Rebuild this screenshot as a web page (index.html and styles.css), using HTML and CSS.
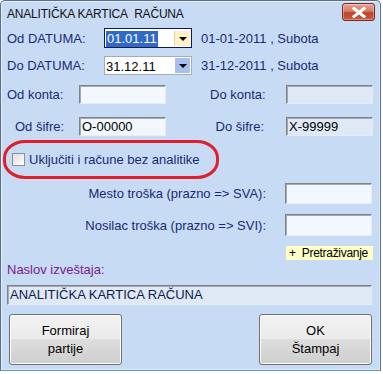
FILE: index.html
```html
<!DOCTYPE html>
<html>
<head>
<meta charset="utf-8">
<link rel="stylesheet" href="styles.css">
</head>
<body>
<div class="win">
  <div class="titlebar">
    <span class="title">ANALITIČKA KARTICA&nbsp; RAČUNA</span>
    <div class="close">
      <svg width="16" height="11" viewBox="0 0 16 11"><path d="M3 1.5 L13 9.5 M13 1.5 L3 9.5" stroke="#ffffff" stroke-width="3" stroke-linecap="square"/></svg>
    </div>
  </div>
  <div class="content">
    <div class="row r-date1">
      <span class="lbl w-date">Od DATUMA:</span>
      <div class="combo active">
        <span class="combo-text"><span class="sel">01.01.11</span></span>
        <span class="drop drop-yellow"><span class="tri"></span></span>
      </div>
      <span class="info">01-01-2011 , Subota</span>
    </div>
    <div class="row r-date2">
      <span class="lbl w-date">Do DATUMA:</span>
      <div class="combo">
        <span class="combo-text">31.12.11</span>
        <span class="drop drop-blue"><span class="tri"></span></span>
      </div>
      <span class="info">31-12-2011 , Subota</span>
    </div>
    <div class="row r-konta">
      <span class="lbl w-left">Od konta:</span>
      <div class="field"></div>
      <span class="lbl w-right">Do konta:</span>
      <div class="field disabled"></div>
    </div>
    <div class="row r-sifre">
      <span class="lbl w-left ind">Od šifre:</span>
      <div class="field">O-00000</div>
      <span class="lbl w-right">Do šifre:</span>
      <div class="field disabled">X-99999</div>
    </div>
    <div class="oval">
      <span class="check"></span>
      <span class="lbl">Uključiti i račune bez analitike</span>
    </div>
    <div class="row r-mesto">
      <span class="lbl w-long">Mesto troška (prazno =&gt; SVA):</span>
      <div class="field tall"></div>
    </div>
    <div class="row r-nosilac">
      <span class="lbl w-long">Nosilac troška (prazno =&gt; SVI):</span>
      <div class="field tall2"></div>
    </div>
    <div class="row r-pretraz">
      <span class="pretraz">+&nbsp; Pretraživanje</span>
    </div>
    <div class="naslov">Naslov izveštaja:</div>
    <div class="field wide">ANALITIČKA KARTICA RAČUNA</div>
    <div class="buttons">
      <button class="btn">Formiraj<br>partije</button>
      <button class="btn">OK<br>Štampaj</button>
    </div>
  </div>
</div>
</body>
</html>
```
FILE: styles.css
```css
html, body {
  margin: 0;
  padding: 0;
  background: #ffffff;
}
body {
  width: 383px;
  height: 374px;
  overflow: hidden;
  font-family: "Liberation Sans", Arial, sans-serif;
  font-size: 13px;
}
.win {
  width: 379px;
  height: 369px;
  background: #c7dbf5;
  border: 1px solid #5d7087;
  border-bottom-color: #5b9fb0;
  border-radius: 5px 5px 0 0;
  box-shadow: inset 1px 1px 0 #e4eefb, inset -1px -1px 0 #d8e6f8;
  position: relative;
}
.titlebar {
  height: 25px;
  display: flex;
  align-items: center;
  justify-content: space-between;
  padding: 0 5px 0 6px;
}
.title {
  font-size: 12px;
  color: #101010;
  letter-spacing: -0.2px;
  padding-top: 1px;
}
.close {
  width: 31px;
  height: 16px;
  margin-top: -3px;
  border: 1px solid #6b2d25;
  border-radius: 3px;
  background: linear-gradient(#e8a493 0%, #d57b66 45%, #c0422c 55%, #c95a3c 100%);
  display: flex;
  align-items: center;
  justify-content: center;
  box-shadow: inset 0 0 0 1px rgba(255,255,255,0.35);
}
.content {
  padding: 0 0 0 6px;
  display: flex;
  flex-direction: column;
}
.row {
  display: flex;
  align-items: center;
}
.lbl {
  color: #1a2a72;
  white-space: nowrap;
}
.w-date { width: 97px; }
.w-left { width: 72px; }
.w-left.ind { padding-left: 8px; width: 64px; }
.w-right { width: 54px; margin-left: 44px; text-align: right; margin-right: 22px; }
.r-date1 { margin-top: 2px; height: 20px; }
.r-date2 { margin-top: 8px; height: 19px; }
.combo {
  width: 85px;
  height: 17px;
  border: 1px solid #a5acb5;
  background: #ffffff;
  display: flex;
  align-items: center;
  padding-left: 1px;
}
.r-date1 .combo { height: 18px; }
.combo.active { border-color: #0c1a5c; }
.combo-text {
  flex: 1;
  color: #000;
  line-height: 15px;
  padding-top: 1px;
}
.sel {
  background: #3169c6;
  color: #ffffff;
  padding: 0 1px 1px 1px;
}
.drop {
  width: 15px;
  height: 15px;
  margin-right: 1px;
  display: flex;
  align-items: center;
  justify-content: center;
}
.drop-yellow { background: #fdf1c6; border-left: 1px solid #e7d59e; }
.drop-blue { background: #a6bff0; }
.tri {
  width: 0;
  height: 0;
  border-left: 4px solid transparent;
  border-right: 4px solid transparent;
  border-top: 4px solid #000;
  margin-top: 1px;
}
.info {
  margin-left: 9px;
  color: #1a2a72;
}
.field {
  width: 83px;
  height: 17px;
  background: #f3f8ff;
  border: 1px solid #7f8389;
  border-right-color: #e4ecf6;
  border-bottom-color: #e4ecf6;
  box-shadow: inset 1px 1px 0 #a5aab1;
  color: #000;
  line-height: 18px;
  padding-left: 2px;
  white-space: nowrap;
}
.field.disabled { background: #dfe9f6; }
.r-konta { margin-top: 9px; height: 21px; }
.r-sifre { margin-top: 11px; height: 21px; }
.oval {
  margin-top: 3px;
  margin-left: -4px;
  width: 204px;
  height: 33px;
  border: 3px solid #e01f2a;
  border-radius: 22px / 18px;
  display: flex;
  align-items: center;
  padding-left: 6px;
}
.check {
  width: 11px;
  height: 11px;
  border: 1px solid #8e8f8f;
  background: linear-gradient(135deg, #dcdcdc, #ffffff);
  margin-right: 4px;
}
.w-long { width: 259px; text-align: right; margin-right: 19px; }
.r-mesto { margin-top: 4px; height: 21px; }
.r-nosilac { margin-top: 10px; height: 22px; }
.tall { height: 19px; }
.tall2 { height: 20px; }
.r-pretraz { margin-top: 10px; height: 14px; }
.pretraz {
  margin-left: 279px;
  width: 84px;
  background: #ffffc8;
  color: #000;
  font-size: 12px;
  letter-spacing: -0.3px;
  padding: 0 0 0 3px;
  height: 14px;
  line-height: 14px;
  white-space: nowrap;
  overflow: hidden;
}
.naslov {
  margin-top: 2px;
  color: #7a1a8a;
  height: 15px;
  line-height: 15px;
}
.field.wide {
  width: 361px;
  height: 18px;
  margin-top: 8px;
  background: #dfe9f6;
  color: #101a50;
}
.buttons {
  margin-top: 9px;
  display: flex;
  justify-content: space-between;
  width: 363px;
  padding-left: 2px;
}
.btn {
  width: 113px;
  height: 51px;
  border: 1px solid #707070;
  border-radius: 3px;
  background: linear-gradient(#f2f2f2 0%, #ebebeb 49%, #dddddd 50%, #cfcfcf 100%);
  box-shadow: inset 0 0 0 1px #fcfcfc;
  font-family: "Liberation Sans", Arial, sans-serif;
  font-size: 13px;
  line-height: 18px;
  color: #000;
  padding: 0;
}
```
